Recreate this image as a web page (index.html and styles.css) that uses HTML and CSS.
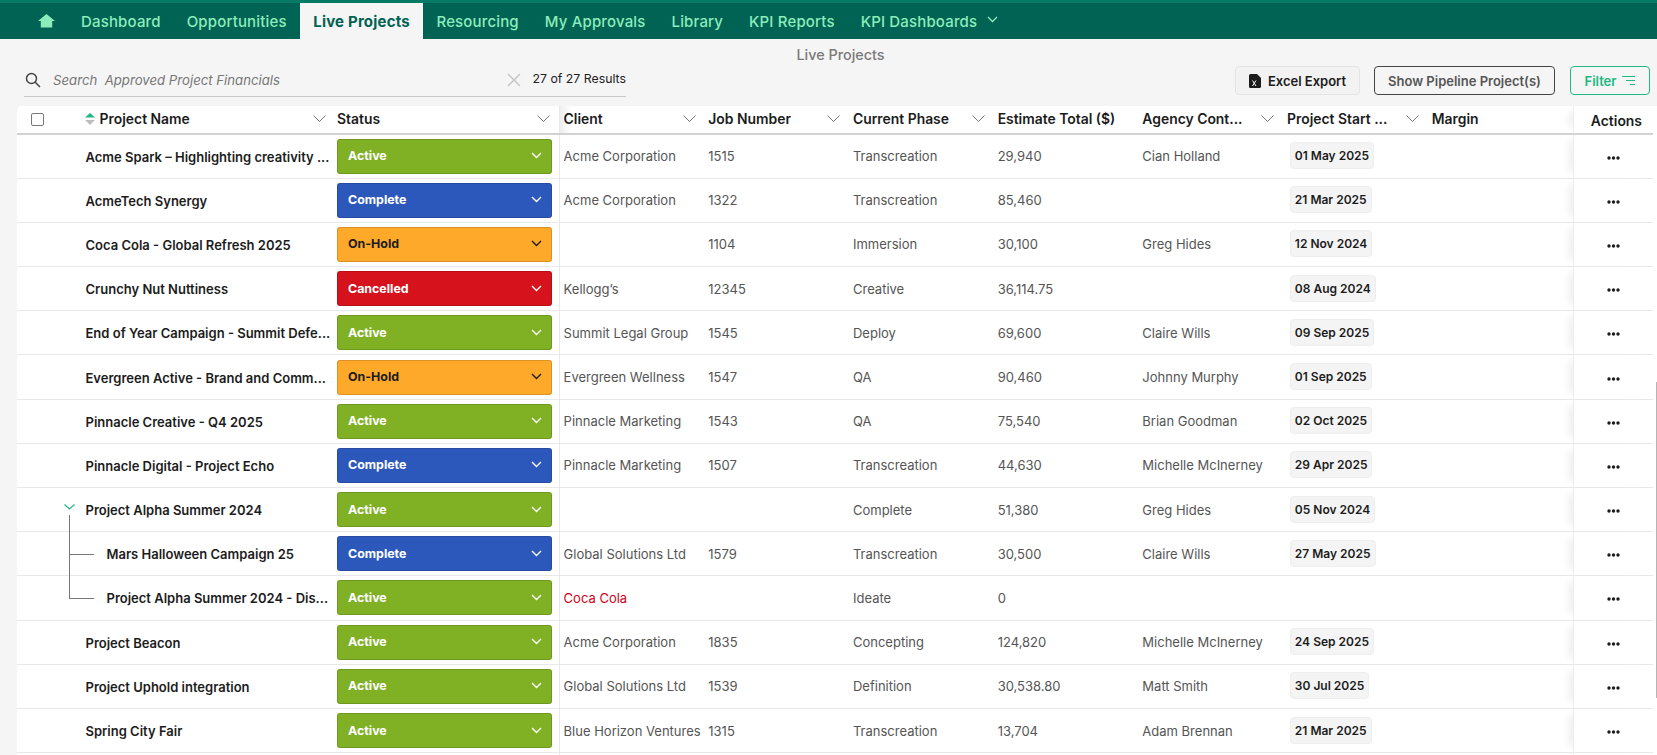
FILE: index.html
```html
<!DOCTYPE html>
<html lang="en">
<head>
<meta charset="utf-8">
<title>Live Projects</title>
<link rel="stylesheet" href="styles.css">
</head>
<body>
<nav class="nav">
  <a class="nav-home" aria-label="Home"><svg width="17" height="14" viewBox="0 0 17 14"><path class="home" d="M8.5 0 L17 7 L14.2 7 L14.2 13.5 L2.8 13.5 L2.8 7 L0 7 Z"/></svg></a>
  <a class="nav-item">Dashboard</a>
  <a class="nav-item">Opportunities</a>
  <a class="nav-item active">Live Projects</a>
  <a class="nav-item">Resourcing</a>
  <a class="nav-item">My Approvals</a>
  <a class="nav-item">Library</a>
  <a class="nav-item">KPI Reports</a>
  <a class="nav-item">KPI Dashboards<svg class="nav-chev" width="11" height="7" viewBox="0 0 11 7"><path d="M1 1 L5.5 5.5 L10 1"/></svg></a>
</nav>
<h1 class="title">Live Projects</h1>
<section class="toolbar">
  <div class="search">
    <svg class="search-icon" width="16" height="16" viewBox="0 0 16 16"><circle cx="6.5" cy="6.5" r="5"/><path d="M10.2 10.2 L15 15"/></svg>
    <span class="search-text">Search&nbsp; Approved Project Financials</span>
    <svg class="search-x" width="14" height="14" viewBox="0 0 14 14"><path d="M1 1 L13 13 M13 1 L1 13"/></svg>
    <span class="results">27 of 27 Results</span>
  </div>
  <div class="buttons">
    <button class="btn btn-excel"><svg width="12" height="14" viewBox="0 0 12 14"><path class="xl-file" d="M1.5 0 H8 L12 4 V12.5 Q12 14 10.5 14 H1.5 Q0 14 0 12.5 V1.5 Q0 0 1.5 0 Z"/><path class="xl-x" d="M3.5 6.5 L7 12 M7 6.5 L3.5 12"/></svg>Excel Export</button>
    <button class="btn btn-pipeline">Show Pipeline Project(s)</button>
    <button class="btn btn-filter">Filter<svg width="13" height="9" viewBox="0 0 13 9"><path d="M0 .5 H13 M4 4.5 H13 M8 8.5 H13"/></svg></button>
  </div>
</section>
<main class="table">
  <div class="row head">
    <div class="cell"><span class="check"></span></div>
    <div class="cell th th-name"><svg class="sort" width="10" height="12" viewBox="0 0 10 12"><path class="up" d="M5 0 L10 4.5 H0 Z"/><path class="down" d="M0 7 H10 L5 12 Z"/></svg><span class="th-label">Project Name</span><svg class="chev" width="13" height="8" viewBox="0 0 13 8"><path d="M.5 .5 L6.5 6.5 L12.5 .5"/></svg></div>
    <div class="cell th th-status"><span class="th-label">Status</span><svg class="chev" width="13" height="8" viewBox="0 0 13 8"><path d="M.5 .5 L6.5 6.5 L12.5 .5"/></svg></div>
    <div class="cell th sep"><span class="th-label">Client</span><svg class="chev" width="13" height="8" viewBox="0 0 13 8"><path d="M.5 .5 L6.5 6.5 L12.5 .5"/></svg></div>
    <div class="cell th"><span class="th-label">Job Number</span><svg class="chev" width="13" height="8" viewBox="0 0 13 8"><path d="M.5 .5 L6.5 6.5 L12.5 .5"/></svg></div>
    <div class="cell th"><span class="th-label">Current Phase</span><svg class="chev" width="13" height="8" viewBox="0 0 13 8"><path d="M.5 .5 L6.5 6.5 L12.5 .5"/></svg></div>
    <div class="cell th"><span class="th-label">Estimate Total ($)</span></div>
    <div class="cell th"><span class="th-label">Agency Cont...</span><svg class="chev" width="13" height="8" viewBox="0 0 13 8"><path d="M.5 .5 L6.5 6.5 L12.5 .5"/></svg></div>
    <div class="cell th"><span class="th-label">Project Start ...</span><svg class="chev" width="13" height="8" viewBox="0 0 13 8"><path d="M.5 .5 L6.5 6.5 L12.5 .5"/></svg></div>
    <div class="cell th"><span class="th-label">Margin</span></div>
    <div class="cell th-actions">Actions</div>
  </div>

  <div class="row">
    <div class="cell"></div><div class="cell name"><span>Acme Spark – Highlighting creativity ...</span></div>
    <div class="cell st"><div class="pill active-st">Active<svg class="pchev" width="11" height="7" viewBox="0 0 11 7"><path d="M1 1 L5.5 5.5 L10 1"/></svg></div></div>
    <div class="cell sep">Acme Corporation</div><div class="cell">1515</div><div class="cell">Transcreation</div><div class="cell">29,940</div><div class="cell">Cian Holland</div>
    <div class="cell"><span class="chip">01 May 2025</span></div><div class="cell"></div>
    <div class="cell act"><svg class="dots" width="13" height="4" viewBox="0 0 13 4"><circle cx="2" cy="2" r="1.7"/><circle cx="6.5" cy="2" r="1.7"/><circle cx="11" cy="2" r="1.7"/></svg></div>
  </div>
  <div class="row">
    <div class="cell"></div><div class="cell name"><span>AcmeTech Synergy</span></div>
    <div class="cell st"><div class="pill complete">Complete<svg class="pchev" width="11" height="7" viewBox="0 0 11 7"><path d="M1 1 L5.5 5.5 L10 1"/></svg></div></div>
    <div class="cell sep">Acme Corporation</div><div class="cell">1322</div><div class="cell">Transcreation</div><div class="cell">85,460</div><div class="cell"></div>
    <div class="cell"><span class="chip">21 Mar 2025</span></div><div class="cell"></div>
    <div class="cell act"><svg class="dots" width="13" height="4" viewBox="0 0 13 4"><circle cx="2" cy="2" r="1.7"/><circle cx="6.5" cy="2" r="1.7"/><circle cx="11" cy="2" r="1.7"/></svg></div>
  </div>
  <div class="row">
    <div class="cell"></div><div class="cell name"><span>Coca Cola - Global Refresh 2025</span></div>
    <div class="cell st"><div class="pill hold">On-Hold<svg class="pchev" width="11" height="7" viewBox="0 0 11 7"><path d="M1 1 L5.5 5.5 L10 1"/></svg></div></div>
    <div class="cell sep"></div><div class="cell">1104</div><div class="cell">Immersion</div><div class="cell">30,100</div><div class="cell">Greg Hides</div>
    <div class="cell"><span class="chip">12 Nov 2024</span></div><div class="cell"></div>
    <div class="cell act"><svg class="dots" width="13" height="4" viewBox="0 0 13 4"><circle cx="2" cy="2" r="1.7"/><circle cx="6.5" cy="2" r="1.7"/><circle cx="11" cy="2" r="1.7"/></svg></div>
  </div>
  <div class="row">
    <div class="cell"></div><div class="cell name"><span>Crunchy Nut Nuttiness</span></div>
    <div class="cell st"><div class="pill cancelled">Cancelled<svg class="pchev" width="11" height="7" viewBox="0 0 11 7"><path d="M1 1 L5.5 5.5 L10 1"/></svg></div></div>
    <div class="cell sep">Kellogg’s</div><div class="cell">12345</div><div class="cell">Creative</div><div class="cell">36,114.75</div><div class="cell"></div>
    <div class="cell"><span class="chip">08 Aug 2024</span></div><div class="cell"></div>
    <div class="cell act"><svg class="dots" width="13" height="4" viewBox="0 0 13 4"><circle cx="2" cy="2" r="1.7"/><circle cx="6.5" cy="2" r="1.7"/><circle cx="11" cy="2" r="1.7"/></svg></div>
  </div>
  <div class="row">
    <div class="cell"></div><div class="cell name"><span>End of Year Campaign - Summit Defe...</span></div>
    <div class="cell st"><div class="pill active-st">Active<svg class="pchev" width="11" height="7" viewBox="0 0 11 7"><path d="M1 1 L5.5 5.5 L10 1"/></svg></div></div>
    <div class="cell sep">Summit Legal Group</div><div class="cell">1545</div><div class="cell">Deploy</div><div class="cell">69,600</div><div class="cell">Claire Wills</div>
    <div class="cell"><span class="chip">09 Sep 2025</span></div><div class="cell"></div>
    <div class="cell act"><svg class="dots" width="13" height="4" viewBox="0 0 13 4"><circle cx="2" cy="2" r="1.7"/><circle cx="6.5" cy="2" r="1.7"/><circle cx="11" cy="2" r="1.7"/></svg></div>
  </div>
  <div class="row">
    <div class="cell"></div><div class="cell name"><span>Evergreen Active - Brand and Comm...</span></div>
    <div class="cell st"><div class="pill hold">On-Hold<svg class="pchev" width="11" height="7" viewBox="0 0 11 7"><path d="M1 1 L5.5 5.5 L10 1"/></svg></div></div>
    <div class="cell sep">Evergreen Wellness</div><div class="cell">1547</div><div class="cell">QA</div><div class="cell">90,460</div><div class="cell">Johnny Murphy</div>
    <div class="cell"><span class="chip">01 Sep 2025</span></div><div class="cell"></div>
    <div class="cell act"><svg class="dots" width="13" height="4" viewBox="0 0 13 4"><circle cx="2" cy="2" r="1.7"/><circle cx="6.5" cy="2" r="1.7"/><circle cx="11" cy="2" r="1.7"/></svg></div>
  </div>
  <div class="row">
    <div class="cell"></div><div class="cell name"><span>Pinnacle Creative - Q4 2025</span></div>
    <div class="cell st"><div class="pill active-st">Active<svg class="pchev" width="11" height="7" viewBox="0 0 11 7"><path d="M1 1 L5.5 5.5 L10 1"/></svg></div></div>
    <div class="cell sep">Pinnacle Marketing</div><div class="cell">1543</div><div class="cell">QA</div><div class="cell">75,540</div><div class="cell">Brian Goodman</div>
    <div class="cell"><span class="chip">02 Oct 2025</span></div><div class="cell"></div>
    <div class="cell act"><svg class="dots" width="13" height="4" viewBox="0 0 13 4"><circle cx="2" cy="2" r="1.7"/><circle cx="6.5" cy="2" r="1.7"/><circle cx="11" cy="2" r="1.7"/></svg></div>
  </div>
  <div class="row">
    <div class="cell"></div><div class="cell name"><span>Pinnacle Digital - Project Echo</span></div>
    <div class="cell st"><div class="pill complete">Complete<svg class="pchev" width="11" height="7" viewBox="0 0 11 7"><path d="M1 1 L5.5 5.5 L10 1"/></svg></div></div>
    <div class="cell sep">Pinnacle Marketing</div><div class="cell">1507</div><div class="cell">Transcreation</div><div class="cell">44,630</div><div class="cell">Michelle McInerney</div>
    <div class="cell"><span class="chip">29 Apr 2025</span></div><div class="cell"></div>
    <div class="cell act"><svg class="dots" width="13" height="4" viewBox="0 0 13 4"><circle cx="2" cy="2" r="1.7"/><circle cx="6.5" cy="2" r="1.7"/><circle cx="11" cy="2" r="1.7"/></svg></div>
  </div>
  <div class="row">
    <div class="cell tree tree-parent"><svg class="expand" width="11" height="6" viewBox="0 0 11 6"><path d="M.5 .5 L5.5 5 L10.5 .5"/></svg></div><div class="cell name"><span>Project Alpha Summer 2024</span></div>
    <div class="cell st"><div class="pill active-st">Active<svg class="pchev" width="11" height="7" viewBox="0 0 11 7"><path d="M1 1 L5.5 5.5 L10 1"/></svg></div></div>
    <div class="cell sep"></div><div class="cell"></div><div class="cell">Complete</div><div class="cell">51,380</div><div class="cell">Greg Hides</div>
    <div class="cell"><span class="chip">05 Nov 2024</span></div><div class="cell"></div>
    <div class="cell act"><svg class="dots" width="13" height="4" viewBox="0 0 13 4"><circle cx="2" cy="2" r="1.7"/><circle cx="6.5" cy="2" r="1.7"/><circle cx="11" cy="2" r="1.7"/></svg></div>
  </div>
  <div class="row">
    <div class="cell tree tree-mid"></div><div class="cell name child"><span>Mars Halloween Campaign 25</span></div>
    <div class="cell st"><div class="pill complete">Complete<svg class="pchev" width="11" height="7" viewBox="0 0 11 7"><path d="M1 1 L5.5 5.5 L10 1"/></svg></div></div>
    <div class="cell sep">Global Solutions Ltd</div><div class="cell">1579</div><div class="cell">Transcreation</div><div class="cell">30,500</div><div class="cell">Claire Wills</div>
    <div class="cell"><span class="chip">27 May 2025</span></div><div class="cell"></div>
    <div class="cell act"><svg class="dots" width="13" height="4" viewBox="0 0 13 4"><circle cx="2" cy="2" r="1.7"/><circle cx="6.5" cy="2" r="1.7"/><circle cx="11" cy="2" r="1.7"/></svg></div>
  </div>
  <div class="row">
    <div class="cell tree tree-end"></div><div class="cell name child"><span>Project Alpha Summer 2024 - Dis...</span></div>
    <div class="cell st"><div class="pill active-st">Active<svg class="pchev" width="11" height="7" viewBox="0 0 11 7"><path d="M1 1 L5.5 5.5 L10 1"/></svg></div></div>
    <div class="cell sep warn">Coca Cola</div><div class="cell"></div><div class="cell">Ideate</div><div class="cell">0</div><div class="cell"></div>
    <div class="cell"></div><div class="cell"></div>
    <div class="cell act"><svg class="dots" width="13" height="4" viewBox="0 0 13 4"><circle cx="2" cy="2" r="1.7"/><circle cx="6.5" cy="2" r="1.7"/><circle cx="11" cy="2" r="1.7"/></svg></div>
  </div>
  <div class="row">
    <div class="cell"></div><div class="cell name"><span>Project Beacon</span></div>
    <div class="cell st"><div class="pill active-st">Active<svg class="pchev" width="11" height="7" viewBox="0 0 11 7"><path d="M1 1 L5.5 5.5 L10 1"/></svg></div></div>
    <div class="cell sep">Acme Corporation</div><div class="cell">1835</div><div class="cell">Concepting</div><div class="cell">124,820</div><div class="cell">Michelle McInerney</div>
    <div class="cell"><span class="chip">24 Sep 2025</span></div><div class="cell"></div>
    <div class="cell act"><svg class="dots" width="13" height="4" viewBox="0 0 13 4"><circle cx="2" cy="2" r="1.7"/><circle cx="6.5" cy="2" r="1.7"/><circle cx="11" cy="2" r="1.7"/></svg></div>
  </div>
  <div class="row">
    <div class="cell"></div><div class="cell name"><span>Project Uphold integration</span></div>
    <div class="cell st"><div class="pill active-st">Active<svg class="pchev" width="11" height="7" viewBox="0 0 11 7"><path d="M1 1 L5.5 5.5 L10 1"/></svg></div></div>
    <div class="cell sep">Global Solutions Ltd</div><div class="cell">1539</div><div class="cell">Definition</div><div class="cell">30,538.80</div><div class="cell">Matt Smith</div>
    <div class="cell"><span class="chip">30 Jul 2025</span></div><div class="cell"></div>
    <div class="cell act"><svg class="dots" width="13" height="4" viewBox="0 0 13 4"><circle cx="2" cy="2" r="1.7"/><circle cx="6.5" cy="2" r="1.7"/><circle cx="11" cy="2" r="1.7"/></svg></div>
  </div>
  <div class="row">
    <div class="cell"></div><div class="cell name"><span>Spring City Fair</span></div>
    <div class="cell st"><div class="pill active-st">Active<svg class="pchev" width="11" height="7" viewBox="0 0 11 7"><path d="M1 1 L5.5 5.5 L10 1"/></svg></div></div>
    <div class="cell sep">Blue Horizon Ventures</div><div class="cell">1315</div><div class="cell">Transcreation</div><div class="cell">13,704</div><div class="cell">Adam Brennan</div>
    <div class="cell"><span class="chip">21 Mar 2025</span></div><div class="cell"></div>
    <div class="cell act"><svg class="dots" width="13" height="4" viewBox="0 0 13 4"><circle cx="2" cy="2" r="1.7"/><circle cx="6.5" cy="2" r="1.7"/><circle cx="11" cy="2" r="1.7"/></svg></div>
  </div>
  <div class="row">
    <div class="cell"></div><div class="cell"></div><div class="cell"></div><div class="cell sep"></div><div class="cell"></div><div class="cell"></div><div class="cell"></div><div class="cell"></div><div class="cell"></div><div class="cell"></div><div class="cell act"></div>
  </div>
  <div class="scrollbar"></div>
</main>
</body>
</html>
```
FILE: styles.css
```css
* { box-sizing: border-box; }
html, body { height: 100%; }
body {
  margin: 0;
  height: 755px;
  overflow: hidden;
  display: flex;
  flex-direction: column;
  background: #f5f5f5;
  color: #1c1c1c;
  font-family: Inter, "Liberation Sans", sans-serif;
  font-size: 13.5px;
}

/* Navigation */
.nav {
  height: 39px;
  flex: none;
  display: flex;
  align-items: stretch;
  padding: 3px 0 0 38px;
  background: #006353;
  box-shadow: inset 0 3px 0 #067a64;
  font-size: 15px;
  font-weight: 500;
  color: #8cedbb;
}
.nav-home { width: 30px; display: flex; align-items: center; padding-bottom: 1px; }
.home { fill: #8cedbb; }
.nav-item {
  display: flex;
  align-items: center;
  gap: 10px;
  padding: 0 13px;
  white-space: nowrap;
  letter-spacing: .16px;
}
.nav-item.active {
  background: #f5f5f5;
  color: #006353;
  font-weight: 700;
  letter-spacing: .2px;
  padding: 0 13.6px;
}
.nav-chev { fill: none; stroke: #8cedbb; stroke-width: 1.3; margin-bottom: 3px; }

/* Title and toolbar */
.title {
  margin: 0;
  height: 27px;
  padding: 5px 0 0 24px;
  flex: none;
  text-align: center;
  font-size: 14.4px;
  line-height: 22px;
  font-weight: 500;
  color: #7a7a7a;
}
.toolbar {
  height: 40px;
  flex: none;
  display: flex;
  justify-content: space-between;
  align-items: flex-start;
  padding: 0 7px 0 24px;
}
.search {
  width: 602px;
  height: 31px;
  display: flex;
  align-items: center;
  padding-bottom: 3px;
  border-bottom: 1px solid #c9c9c9;
}
.search-icon { flex: none; margin-left: 1px; fill: none; stroke: #444; stroke-width: 1.5; }
.search-text { flex: 1; margin-left: 12px; font-style: italic; font-size: 13.2px; color: #777; }
.search-x { flex: none; fill: none; stroke: #c4c4c4; stroke-width: 1.3; margin-right: 12px; }
.results { flex: none; font-size: 12.3px; color: #222; margin-bottom: 2px; }
.buttons { display: flex; gap: 14px; }
.btn {
  height: 29px;
  display: flex;
  align-items: center;
  justify-content: center;
  border-radius: 4px;
  font-family: inherit;
  font-size: 13px;
  font-weight: 600;
  padding: 0;
}
.btn-excel {
  width: 125px;
  gap: 7px;
  background: #f2f2f2;
  border: 1px solid #e4e4e4;
  color: #1c1c1c;
}
.xl-file { fill: #1c1c1c; }
.xl-x { fill: none; stroke: #fff; stroke-width: 1; }
.btn-pipeline {
  width: 181px;
  background: transparent;
  border: 1px solid #444;
  color: #555;
}
.btn-filter {
  width: 80px;
  margin-left: 1px;
  gap: 6px;
  background: transparent;
  border: 1px solid #20b981;
  color: #20b981;
}
.btn-filter svg { fill: none; stroke: #20b981; stroke-width: 1; }

/* Table */
.table {
  position: relative;
  flex: 1;
  margin-left: 17px;
  padding-right: 4px;
  overflow: hidden;
  background: #fff;
  border-top-left-radius: 5px;
}
.row {
  display: grid;
  grid-template-columns: 68px 247px 227px repeat(6, 144.7px) 146.3px 79.5px;
  height: 44.2px;
  border-bottom: 1px solid #e8e8e8;
  color: #555;
  font-size: 13px;
}
.row.head {
  height: 28.5px;
  border-bottom: 2px solid #d2d2d2;
  color: #1c1c1c;
  font-size: 13.9px;
  font-weight: 600;
}
.cell {
  position: relative;
  min-width: 0;
  display: flex;
  align-items: center;
  padding-left: 4.6px;
  white-space: nowrap;
}
.sep { border-left: 1px solid #e8e8e8; padding-left: 3.6px; }
.check {
  width: 13px;
  height: 13px;
  margin-left: 9.5px;
  border: 1px solid #777;
  border-radius: 2px;
  background: #fff;
}
.th { justify-content: space-between; padding-right: 8px; }
.th.sep { background: linear-gradient(90deg, #eee, #fff 11px); }
.th-label { overflow: hidden; }
.chev { flex: none; fill: none; stroke: #777; stroke-width: 1; }
.th-name { padding-left: 0; padding-right: 6px; }
.sort { flex: none; }
.up { fill: #20b981; }
.down { fill: #bdbdbd; }
.th-name .th-label { flex: 1; margin-left: 4.6px; }
.th-status { padding-left: 5px; padding-right: 9px; }
.th-actions {
  justify-content: center;
  padding-left: 5.5px;
  padding-top: 4px;
  border-left: 1px solid #eee;
  box-shadow: -10px 0 8px -6px #eee;
}
.name {
  padding: 1px 0 0 .5px;
  color: #1c1c1c;
  font-weight: 600;
  font-size: 13px;
}
.child { padding-left: 21.5px; }
.st { padding: 0 0 0 4.5px; }
.pill {
  width: 215.5px;
  height: 35px;
  display: flex;
  align-items: center;
  justify-content: space-between;
  padding: 0 9.5px 1px 10.5px;
  border: 1px solid rgba(0, 0, 0, .14);
  border-radius: 3px;
  color: #fff;
  font-size: 12.4px;
  font-weight: 700;
}
.pchev { fill: none; stroke: #fff; stroke-width: 1.4; }
.active-st { background: #80b124; }
.complete { background: #2d58bb; }
.hold { background: #ffa92b; color: #1c1c1c; }
.hold .pchev { stroke: #1c1c1c; }
.cancelled { background: #d6121d; }
.warn { color: #d0021b; }
.chip {
  height: 27px;
  display: flex;
  align-items: center;
  margin-left: 2.8px;
  margin-bottom: 1px;
  padding: 0 4px;
  border: 1px solid #eee;
  border-radius: 4px;
  background: #f4f4f4;
  color: #1c1c1c;
  font-size: 12px;
  font-weight: 600;
}
.act {
  justify-content: center;
  padding: 3px 0 0;
  border-left: 1px solid #eee;
  box-shadow: -10px 0 8px -6px #eee;
}
.dots { fill: #1c1c1c; }

/* Tree connectors */
.expand {
  position: absolute;
  left: 46.5px;
  top: 15.5px;
  fill: none;
  stroke: #20b981;
  stroke-width: 1.2;
}
.tree-parent::after,
.tree-mid::before,
.tree-mid::after,
.tree-end::before,
.tree-end::after {
  content: "";
  position: absolute;
  background: #777;
}
.tree-parent::after { left: 52px; width: 1px; top: 27px; bottom: -1px; }
.tree-mid::before { left: 52px; width: 1px; top: 0; bottom: -1px; }
.tree-mid::after { left: 52px; width: 25px; height: 1px; top: 22px; }
.tree-end::before { left: 52px; width: 1px; top: 0; height: 22px; }
.tree-end::after { left: 52px; width: 25px; height: 1px; top: 22px; }

.scrollbar {
  position: absolute;
  right: 0;
  top: 276px;
  width: 1px;
  height: 316px;
  background: #b5b5b5;
}
```
